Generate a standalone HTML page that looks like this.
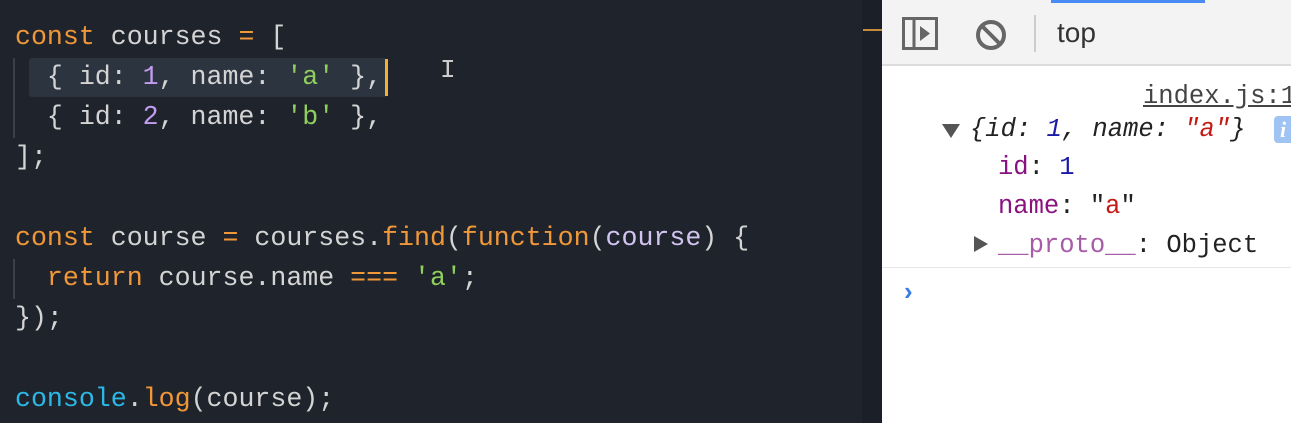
<!DOCTYPE html>
<html><head><style>
body{margin:0;width:1291px;height:423px;overflow:hidden;background:#1f232b;position:relative;font-family:"Liberation Mono",monospace}
.ed{position:absolute;left:0;top:0;width:862px;height:423px;background:#1f232b}
.gut{position:absolute;left:862px;top:0;width:20px;height:423px;background:#1b1f27}
.l{position:absolute;left:15px;font-size:26.6px;line-height:40px;height:40px;white-space:pre;color:#d4d4d4}
.k{color:#f0973a}.p{color:#c29cf0}.s{color:#8fcf5c}.c{color:#2bb8e6}.v{color:#d2c4f0}
.hl{position:absolute;left:29px;top:58px;width:358px;height:39px;background:#2c3440;border-radius:3px}
.dt{position:absolute;left:882px;top:0;width:409px;height:423px;background:#fff}
.tb{position:absolute;left:0;top:0;width:409px;height:64px;background:#f3f3f3;border-bottom:2px solid #dcdcdc}
.cl{position:absolute;font-size:25.5px;line-height:39px;white-space:pre;color:#222}
</style></head><body>
<div class="ed"></div>
<div class="hl"></div>
<div style="position:absolute;left:13px;top:58px;width:2px;height:80px;background:#3a3f48"></div>
<div style="position:absolute;left:13px;top:259px;width:2px;height:40px;background:#3a3f48"></div>
<div style="position:absolute;left:385px;top:59px;width:3px;height:37px;background:#f2b134"></div>
<div style="position:absolute;left:440px;top:55px;color:#ccc;font-size:26px">I</div>
<div class="l" style="top:17px"><span class="k">const</span> courses <span class="k">=</span> [</div>
<div class="l" style="top:57px">  { id: <span class="p">1</span>, name: <span class="s">'a'</span> },</div>
<div class="l" style="top:97px">  { id: <span class="p">2</span>, name: <span class="s">'b'</span> },</div>
<div class="l" style="top:137px">];</div>
<div class="l" style="top:218px"><span class="k">const</span> course <span class="k">=</span> courses.<span class="k">find</span>(<span class="k">function</span>(<span class="v">course</span>) {</div>
<div class="l" style="top:258px">  <span class="k">return</span> course.name <span class="k">===</span> <span class="s">'a'</span>;</div>
<div class="l" style="top:298px">});</div>
<div class="l" style="top:379px"><span class="c">console</span>.<span class="k">log</span>(course);</div>
<div class="gut"></div>
<div style="position:absolute;left:863px;top:29px;width:19px;height:2px;background:#c8893a"></div>
<div class="dt">
<div class="tb">
<div style="position:absolute;left:169px;top:0;width:154px;height:3px;background:#4a8af4"></div>
<svg style="position:absolute;left:20px;top:17px" width="36" height="34" viewBox="0 0 36 34"><rect x="1.5" y="1.5" width="33" height="30" fill="none" stroke="#666" stroke-width="3"/><line x1="12" y1="2" x2="12" y2="32" stroke="#666" stroke-width="3"/><path d="M18 9 L28 16.5 L18 24Z" fill="#666"/></svg>
<svg style="position:absolute;left:93px;top:19px" width="32" height="32" viewBox="0 0 32 32"><circle cx="16" cy="16" r="13" fill="none" stroke="#666" stroke-width="4"/><line x1="7" y1="7" x2="25" y2="25" stroke="#666" stroke-width="4"/></svg>
<div style="position:absolute;left:152px;top:15px;width:2px;height:37px;background:#ccc"></div>
<div style="position:absolute;left:175px;top:17px;font-family:'Liberation Sans',sans-serif;font-size:28px;color:#333">top</div>
</div>
<div class="cl" style="left:261px;top:77px;text-decoration:underline;color:#444">index.js:1</div>
<div style="position:absolute;left:60px;top:124px;width:0;height:0;border-left:9px solid transparent;border-right:9px solid transparent;border-top:14px solid #555"></div>
<div class="cl" style="left:88px;top:110px;font-style:italic">{id: <span style="color:#1a1aa6">1</span>, name: <span style="color:#c41a16">"a"</span>}</div>
<div style="position:absolute;left:392px;top:116px;width:22px;height:27px;background:#9fc3f3;border-radius:4px;color:#fff;font-style:italic;font-size:22px;line-height:27px;text-indent:6px;font-family:'Liberation Serif',serif;font-weight:bold">i</div>
<div class="cl" style="left:116px;top:148px"><span style="color:#881280">id</span>: <span style="color:#1a1aa6">1</span></div>
<div class="cl" style="left:116px;top:187px"><span style="color:#881280">name</span>: "<span style="color:#c41a16">a</span>"</div>
<div style="position:absolute;left:92px;top:236px;width:0;height:0;border-top:8px solid transparent;border-bottom:8px solid transparent;border-left:14px solid #555"></div>
<div class="cl" style="left:116px;top:226px"><span style="color:#a65ca6">__proto__</span>: Object</div>
<div style="position:absolute;left:0;top:267px;width:409px;height:1px;background:#e6e6e6"></div>
<div style="position:absolute;left:22px;top:276px;color:#3a7ce8;font-size:26px;font-family:'Liberation Sans',sans-serif;font-weight:bold">›</div>
</div>
</body></html>
